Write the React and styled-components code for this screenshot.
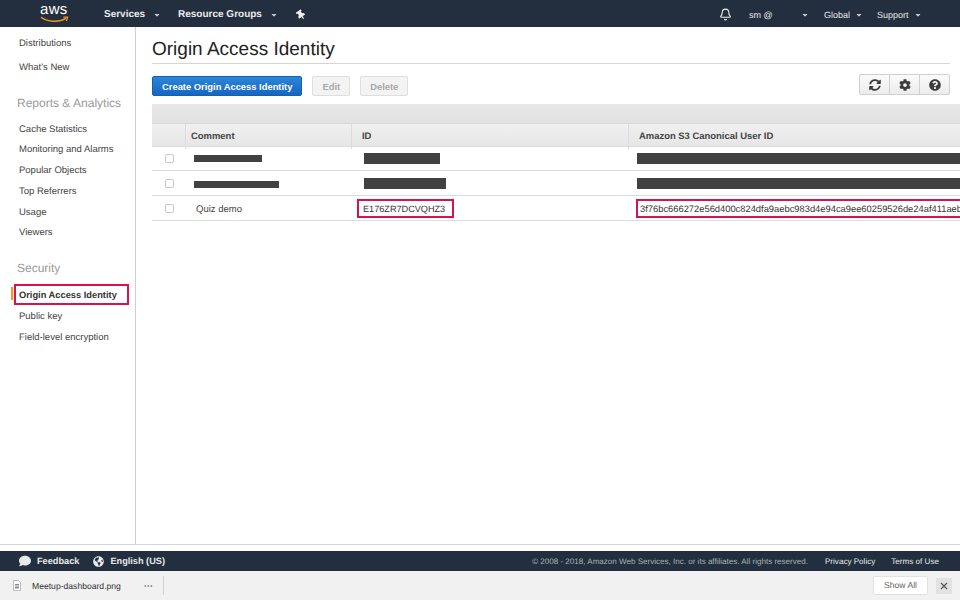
import React from "react";
import styled, { createGlobalStyle } from "styled-components";
import { Bell } from "lucide-react";
import { FaSyncAlt, FaCog, FaQuestionCircle, FaComment, FaGlobeAmericas, FaCaretDown, FaThumbtack } from "react-icons/fa";

const GlobalStyle = createGlobalStyle`
  html, body { margin: 0; padding: 0; height: 100%; overflow: hidden; background: #fff; }
  body { font-family: "Liberation Sans", Arial, sans-serif; color: #444; text-rendering: geometricPrecision; }
  *, *::before, *::after { box-sizing: border-box; }
`;

const Page = styled.div`
  width: 960px;
  height: 600px;
  display: flex;
  flex-direction: column;
  overflow: hidden;
`;

const TopBar = styled.div`
  height: 27px;
  flex: none;
  background: #232f3e;
  display: flex;
  align-items: center;
  padding-right: 35px;
  color: #e8eaec;
`;

const Logo = styled.div`
  width: 104px;
  padding-left: 40px;
  display: flex;
  flex-direction: column;
  align-items: flex-start;
  height: 27px;
  overflow: hidden;
`;

const LogoText = styled.span`
  color: #fff;
  font-size: 15px;
  line-height: 14px;
  margin-top: 3px;
  letter-spacing: 0.3px;
`;

const NavItem = styled.div`
  display: flex;
  align-items: center;
  gap: ${(p) => p.$gap || 8}px;
  width: ${(p) => (p.$width ? `${p.$width}px` : "auto")};
  height: 27px;
  padding-top: 2px;
  font-weight: ${(p) => (p.$bold ? 700 : 400)};
  font-size: ${(p) => (p.$bold ? 10 : 9)}px;
  flex: none;
  svg { flex: none; }
`;

const PinIcon = styled(FaThumbtack)`
  transform: rotate(-35deg);
`;

const Spacer = styled.div`
  flex: 1;
`;

const Body = styled.div`
  height: 518px;
  flex: none;
  display: flex;
  border-bottom: 1px solid #d5d5d5;
`;

const Sidebar = styled.nav`
  width: 136px;
  flex: none;
  border-right: 1px solid #cfcfcf;
  padding: 5px 0 0 19px;
  font-size: 9.5px;
  color: #444;
`;

const SideLink = styled.div`
  position: relative;
  height: ${(p) => p.$height || 20.75}px;
  line-height: ${(p) => p.$height || 20.75}px;
  white-space: nowrap;
  font-weight: ${(p) => (p.$active ? 700 : 400)};
  font-size: ${(p) => (p.$active ? 9.3 : 9.5)}px;
  color: ${(p) => (p.$active ? "#333" : "#444")};
  ${(p) =>
    p.$active &&
    `
    &::before {
      content: "";
      position: absolute;
      left: -8px;
      top: 2px;
      width: 2px;
      height: 13px;
      background: #f7981d;
    }
    &::after {
      content: "";
      position: absolute;
      left: -5px;
      top: -1px;
      width: 115px;
      height: 21px;
      border: 2px solid #d8124f;
    }
  `}
`;

const SideHeading = styled.div`
  font-size: 12px;
  color: #9a9a9a;
  line-height: 16px;
  margin: ${(p) => p.$top}px 0 ${(p) => p.$bottom}px -2px;
`;

const Main = styled.main`
  flex: 1;
  min-width: 0;
  padding: 11px 0 0 16px;
  overflow: hidden;
`;

const Title = styled.h1`
  margin: 0 10px 0 0;
  height: 26px;
  font-size: 19px;
  line-height: 24px;
  font-weight: 400;
  color: #222;
  border-bottom: 1px solid #d5d5d5;
`;

const Toolbar = styled.div`
  margin: 12px 10px 0 0;
  height: 20px;
  display: flex;
  align-items: center;
  gap: 10px;
`;

const Button = styled.button`
  height: 20px;
  padding: 0 9px;
  border-radius: 2px;
  font-family: inherit;
  font-size: 9.4px;
  font-weight: 700;
  border: 1px solid ${(p) => (p.$primary ? "#135fb0" : "#dedede")};
  color: ${(p) => (p.$primary ? "#fff" : "#a8a8a8")};
  background: ${(p) => (p.$primary ? "linear-gradient(#2c85d8, #1666c1)" : "#f3f3f3")};
`;

const IconGroup = styled.div`
  margin-left: auto;
  align-self: flex-start;
  margin-top: -2px;
  display: flex;
  width: 91px;
  height: 21px;
  border: 1px solid #d0d0d0;
  border-radius: 2px;
  background: linear-gradient(#fbfbfb, #ececec);
`;

const IconButton = styled.div`
  flex: 1;
  display: flex;
  align-items: center;
  justify-content: center;
  color: #3c3c3c;
  font-size: 12px;
  & + & { border-left: 1px solid #d0d0d0; }
`;

const Table = styled.div`
  margin-top: 8px;
  width: 860px;
`;

const TableTop = styled.div`
  height: 20px;
  background: linear-gradient(#e8e8e8, #e2e2e2);
  border-bottom: 1px solid #d8d8d8;
`;

const Row = styled.div`
  display: grid;
  grid-template-columns: 33px 166px 277px 384px;
  height: ${(p) => p.$height}px;
  border-bottom: 1px solid #dcdcdc;
  ${(p) => p.$head && "background: linear-gradient(#f0f0f0, #e6e6e6);"}
`;

const HeadCell = styled.div`
  border-left: ${(p) => (p.$first ? "none" : "1px solid #dcdcdc")};
  padding-left: ${(p) => p.$pad || 10}px;
  font-size: 9.45px;
  font-weight: 700;
  line-height: 25px;
  color: #444;
  white-space: nowrap;
`;

const Cell = styled.div`
  display: flex;
  align-items: center;
  padding-left: ${(p) => p.$pad}px;
  padding-top: ${(p) => p.$drop || 0}px;
  font-size: 9.5px;
  color: #444;
  white-space: nowrap;
  min-width: 0;
`;

const Check = styled.span`
  width: 9px;
  height: 9px;
  margin-left: 13px;
  border: 1px solid #c8c8c8;
  border-radius: 2px;
  background: #fff;
`;

const Redacted = styled.span`
  display: block;
  height: ${(p) => p.$height || 11}px;
  width: ${(p) => p.$width}px;
  margin-top: ${(p) => p.$top || 0}px;
  background: #414141;
`;

const Marked = styled.span`
  display: block;
  flex: none;
  height: 19px;
  line-height: 17px;
  font-size: ${(p) => p.$size}px;
  padding: 0 ${(p) => p.$right}px 0 ${(p) => p.$left}px;
  border: 2px solid #d8124f;
  color: #333;
`;

const Footer = styled.footer`
  margin-top: 6px;
  height: 20px;
  flex: none;
  background: #232f3e;
  display: flex;
  align-items: center;
  padding: 0 21px 0 19px;
  color: #e8eaec;
`;

const FooterLink = styled.span`
  display: flex;
  align-items: center;
  gap: 6px;
  margin-right: ${(p) => p.$right || 0}px;
  font-weight: ${(p) => (p.$bold ? 700 : 400)};
  font-size: ${(p) => (p.$bold ? 9.2 : 8.1)}px;
  white-space: nowrap;
`;

const Copyright = styled.span`
  color: #a9afb6;
  font-size: 8.05px;
  margin-right: 17px;
`;

const DownloadBar = styled.div`
  flex: 1;
  background: #f1f1f1;
  display: flex;
  align-items: center;
  padding: 0 8px 0 13px;
  font-size: 8.6px;
  color: #333;
`;

const FileName = styled.span`
  margin-left: 11px;
  width: 112px;
`;

const More = styled.span`
  font-weight: 700;
  color: #555;
  line-height: 8px;
  font-size: 9px;
  width: 19px;
`;

const Divider = styled.span`
  width: 1px;
  height: 19px;
  background: #d0d0d0;
`;

const ShowAll = styled.div`
  margin-left: auto;
  width: 55px;
  height: 19px;
  line-height: 17px;
  text-align: center;
  background: #fff;
  border: 1px solid #e2e2e2;
  border-radius: 2px;
  color: #666;
`;

const Close = styled.div`
  margin-left: 8px;
  width: 16px;
  height: 16px;
  background: #e2e2e2;
  border-radius: 1px;
  display: flex;
  align-items: center;
  justify-content: center;
`;

const Smile = () => (
  <svg width="30" height="8" viewBox="0 0 30 8" style={{ marginTop: -1 }}>
    <path d="M1 1.2C8 6.2 19 6.6 26 2.4" fill="none" stroke="#f7981d" strokeWidth="1.4" />
    <path d="M23.4 1.2L27.6 1.2L26.4 5" fill="none" stroke="#f7981d" strokeWidth="1.2" />
  </svg>
);

const FileIcon = () => (
  <svg width="8" height="11" viewBox="0 0 8 11">
    <path d="M0.5 0.5H5.5L7.5 2.5V10.5H0.5Z" fill="#fff" stroke="#bbb" />
    <rect x="2" y="4" width="4" height="1.5" fill="#7a8ea8" />
    <rect x="2" y="6.5" width="4" height="2" fill="#8a8a8a" />
  </svg>
);

const Caret = () => <FaCaretDown size={8} color="#c4c8cd" />;

const links = [
  "Cache Statistics",
  "Monitoring and Alarms",
  "Popular Objects",
  "Top Referrers",
  "Usage",
  "Viewers",
];

const App = () => (
  <Page>
    <GlobalStyle />
    <TopBar>
      <Logo>
        <LogoText>aws</LogoText>
        <Smile />
      </Logo>
      <NavItem $bold $width={74}>Services <Caret /></NavItem>
      <NavItem $bold $width={118}>Resource Groups <Caret /></NavItem>
      <NavItem><PinIcon size={10} color="#eee" /></NavItem>
      <Spacer />
      <NavItem $width={30}><Bell size={13} color="#eee" /></NavItem>
      <NavItem $width={52}>sm @</NavItem>
      <NavItem $width={23}><Caret /></NavItem>
      <NavItem $width={53} $gap={5}>Global <Caret /></NavItem>
      <NavItem $width={48} $gap={5}>Support <Caret /></NavItem>
    </TopBar>

    <Body>
      <Sidebar>
        <SideLink $height={24}>Distributions</SideLink>
        <SideLink $height={24}>What's New</SideLink>
        <SideHeading $top={15} $bottom={8.6}>Reports &amp; Analytics</SideHeading>
        {links.map((l) => (
          <SideLink key={l}>{l}</SideLink>
        ))}
        <SideHeading $top={16.4} $bottom={9}>Security</SideHeading>
        <SideLink $active $height={21.75}>Origin Access Identity</SideLink>
        <SideLink>Public key</SideLink>
        <SideLink>Field-level encryption</SideLink>
      </Sidebar>

      <Main>
        <Title>Origin Access Identity</Title>
        <Toolbar>
          <Button $primary>Create Origin Access Identity</Button>
          <Button>Edit</Button>
          <Button>Delete</Button>
          <IconGroup>
            <IconButton><FaSyncAlt /></IconButton>
            <IconButton><FaCog /></IconButton>
            <IconButton><FaQuestionCircle /></IconButton>
          </IconGroup>
        </Toolbar>

        <Table>
          <TableTop />
          <Row $head $height={23}>
            <HeadCell $first />
            <HeadCell $pad={5}>Comment</HeadCell>
            <HeadCell>ID</HeadCell>
            <HeadCell>Amazon S3 Canonical User ID</HeadCell>
          </Row>
          <Row $height={24}>
            <Cell><Check /></Cell>
            <Cell $pad={9}><Redacted $width={68} $height={7} /></Cell>
            <Cell $pad={13}><Redacted $width={76} /></Cell>
            <Cell $pad={9}><Redacted $width={340} /></Cell>
          </Row>
          <Row $height={25}>
            <Cell><Check /></Cell>
            <Cell $pad={9}><Redacted $width={85} $height={7} $top={2} /></Cell>
            <Cell $pad={13}><Redacted $width={82} /></Cell>
            <Cell $pad={9}><Redacted $width={340} /></Cell>
          </Row>
          <Row $height={25}>
            <Cell><Check /></Cell>
            <Cell $pad={11} $drop={2}>Quiz demo</Cell>
            <Cell $pad={6}><Marked $size={9.15} $left={4} $right={7}>E176ZR7DCVQHZ3</Marked></Cell>
            <Cell $pad={8}><Marked $size={9.35} $left={2} $right={0}>3f76bc666272e56d400c824dfa9aebc983d4e94ca9ee60259526de24af411aeb</Marked></Cell>
          </Row>
        </Table>
      </Main>
    </Body>

    <Footer>
      <FooterLink $bold $right={14}><FaComment size={12} /> Feedback</FooterLink>
      <FooterLink $bold><FaGlobeAmericas size={11} /> English (US)</FooterLink>
      <Spacer />
      <Copyright>© 2008 - 2018, Amazon Web Services, Inc. or its affiliates. All rights reserved.</Copyright>
      <FooterLink $right={16}>Privacy Policy</FooterLink>
      <FooterLink>Terms of Use</FooterLink>
    </Footer>

    <DownloadBar>
      <FileIcon />
      <FileName>Meetup-dashboard.png</FileName>
      <More>···</More>
      <Divider />
      <ShowAll>Show All</ShowAll>
      <Close>
        <svg width="8" height="8" viewBox="0 0 8 8">
          <path d="M1 1L7 7M7 1L1 7" stroke="#555" strokeWidth="1.2" />
        </svg>
      </Close>
    </DownloadBar>
  </Page>
);

export default App;
